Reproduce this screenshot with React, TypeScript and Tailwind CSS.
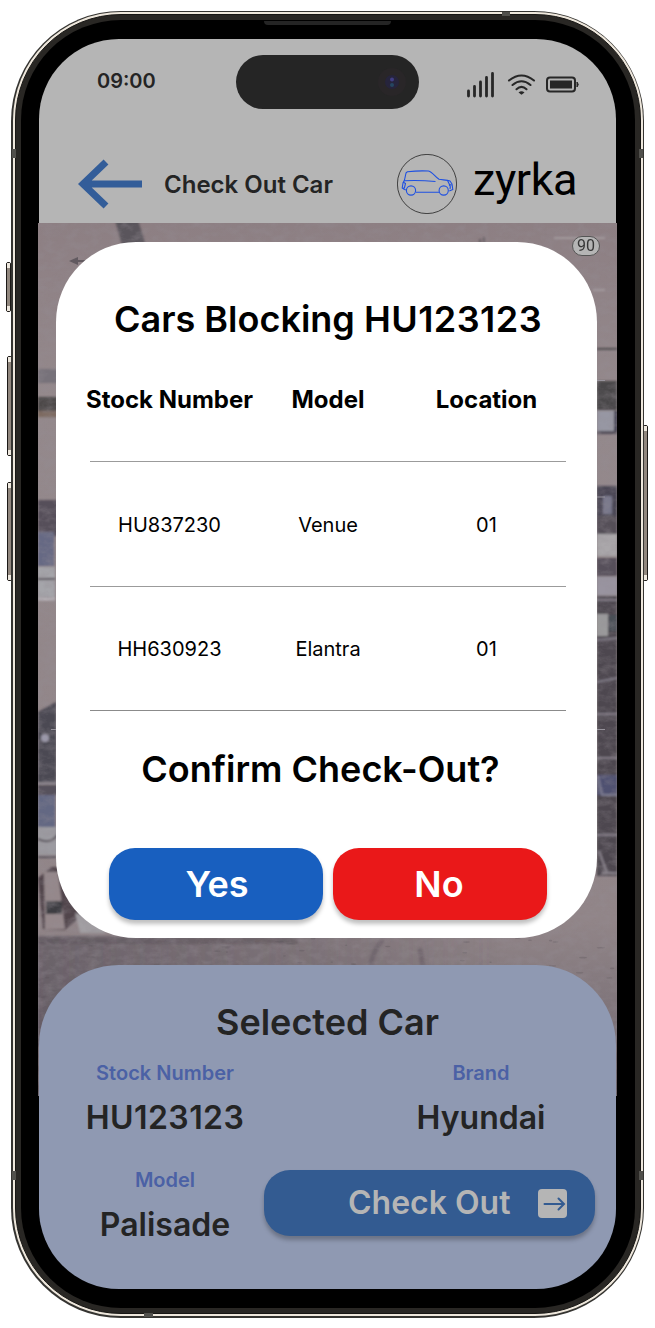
import React from "react";

const speck = (seed: number) => {
  const x = Math.sin(seed * 127.1) * 43758.5453;
  return x - Math.floor(x);
};

function Aerial() {
  return (
    <svg className="block h-full w-full" viewBox="38 223 579 873" preserveAspectRatio="none">
      <defs>
        <filter id="grain" x="0" y="0" width="100%" height="100%">
          <feTurbulence type="fractalNoise" baseFrequency="0.09 0.14" numOctaves="4" seed="8" />
          <feColorMatrix values="0 0 0 0 0.3  0 0 0 0 0.27  0 0 0 0 0.3  1.3 0.5 0 0 -0.72" />
        </filter>
        <filter id="soft"><feGaussianBlur stdDeviation="0.8" /></filter>
        <linearGradient id="dirt" x1="0" x2="0" y1="0" y2="1">
          <stop offset="0" stopColor="#8d7f83" /><stop offset="0.2" stopColor="#94898c" />
          <stop offset="0.8" stopColor="#918588" /><stop offset="1" stopColor="#6d646c" />
        </linearGradient>
        <linearGradient id="shade" x1="0" x2="1" y1="0" y2="0">
          <stop offset="0" stopColor="#57505a" stopOpacity=".6" /><stop offset="0.5" stopColor="#57505a" stopOpacity=".25" />
          <stop offset="0.8" stopColor="#57505a" stopOpacity="0" />
        </linearGradient>
      </defs>
      <rect x="38" y="223" width="579" height="873" fill="url(#dirt)" />
      <g filter="url(#soft)">
        <path d="M115 220h23l8 26h-24z" fill="#5a555b" />
        <path d="M38 369h22v14H38z" fill="#77727a" />
        <path d="M38 397h22v14H38z" fill="#4d4a48" />
        <path d="M38 411h22v6H38z" fill="#7d6b61" />
        <path d="M38 500h22v36H38z" fill="#56505a" />
        <path d="M38 532h16v34H38z" fill="#666984" />
        <path d="M38 567h17v30H38z" fill="#a5a5aa" />
        <path d="M38 579h17" stroke="#504c54" strokeWidth="2" />
        <path d="M38 599h17" stroke="#bbb7bd" strokeWidth="3" />
        <path d="M38 712l18-10v81H38z" fill="#4c4852" />
        <circle cx="45" cy="738" r="4" fill="#9b99aa" />
        <path d="M38 783h20" stroke="#85808a" strokeWidth="2" />
        <path d="M38 785h20v10H38z" fill="#57515b" />
        <path d="M38 795h17v35H38z" fill="#646783" />
        <path d="M38 827h20v28H38z" fill="#9c9ba1" />
        <path d="M38 839c8 4 15 3 20-5M38 857h18" stroke="#59535b" strokeWidth="2" fill="none" />
        <path d="M38 878l14-11 8 0 22 48-17 15-22-1z" fill="#51454c" />
        <path d="M44 872h14l7 57H45z" fill="#95888b" />
        <path d="M46 901h16v13H46z" fill="#3e3c42" />
        <path d="M75 913l17 5 14 15H80z" fill="#a29fa3" />
        <path d="M38 938h260v6H38z" fill="#675e61" opacity=".6" />
        <path d="M38 936h579v110H38z" fill="url(#shade)" />
        <path d="M383 940q-12 12-12 28M420 948l3 20" stroke="#675e66" strokeWidth="5" fill="none" opacity=".6" />
        <path d="M597 348h20v2h-20z" fill="#4e484e" />
        <path d="M597 381h20v29h-20z" fill="#4a4748" />
        <path d="M597 411h17v20h-17z" fill="#9797a3" />
        <path d="M614 411h3v20h-3z" fill="#35344a" />
        <path d="M597 431h20v3h-20z" fill="#514c56" />
        <path d="M597 486h20v30h-20z" fill="#4c4755" />
        <path d="M603 496h9v18h-9z" fill="#77778b" />
        <path d="M597 516h20v18h-20z" fill="#555059" />
        <path d="M597 534h20v22h-20z" fill="#aaa7aa" />
        <path d="M597 558h20v18h-20z" fill="#56505a" />
        <path d="M597 577h20v18h-20z" fill="#9994a0" />
        <path d="M597 596h20v280h-20z" fill="#4d4750" />
        <path d="M597 614h11v22h-11z" fill="#9b9b9c" />
        <path d="M609 615h8v16h-8z" fill="#495057" />
        <path d="M597 640l20-2M597 682l20-4M597 714h20M597 758h20M597 835h20M597 600h20" stroke="#817c87" strokeWidth="2" />
        <path d="M597 775h20v20h-20z" fill="#505171" />
        <path d="M598 776l4 19h15" stroke="#7b7b91" strokeWidth="2" fill="none" />
        <path d="M599 851l8 22M602 873h15" stroke="#87818a" strokeWidth="2" />
        <path d="M554 238h51M593 290h12" stroke="#a69ca0" strokeWidth="2" />
        <path d="M480 239v4M484 237v6" stroke="#655c62" strokeWidth="2" />
      </g>
      {Array.from({ length: 90 }, (_, i) => (
        <ellipse key={i} cx={38 + speck(i) * 579} cy={935 + speck(i + 100) * 80} rx={1 + speck(i + 200) * 4} ry="0.8" fill="#554e55" opacity=".3" />
      ))}
      <rect x="38" y="223" width="579" height="873" filter="url(#grain)" opacity=".5" />
      <path d="M69 261l9-4v3h8v2h-8v3z" fill="#625a60" />
      <path d="M597 380.500h8M597 497h8M597 729.500h8M51 729.500h5" stroke="#97939c" />
    </svg>
  );
}

function CarLogo() {
  return (
    <svg className="h-[60px] w-[60px]" viewBox="397 154 60 60" fill="none">
      <circle cx="427" cy="184" r="29.600" stroke="#222" strokeWidth=".8" />
      <g stroke="#1e50e2" strokeWidth="1.100" strokeLinejoin="round">
        <path d="M404.500 180l1.500-7 1.500-1.300q11-1.200 21-.7c4 1 6.500 5.500 10.500 8.300 4 .7 8 .5 11 1.700l2 3 .8 5.500-3.500 1.500M404.500 180l-1.500 3-.8 5 3.500 2M416 192.300h23" />
        <path d="M404 180.800q15-.8 31.500.7M403 182l2.500 1.500-1 4-1.500 1.500M447.500 180.500l2 4 2.300.5M450 189q1-3-1-4.500" />
        <circle cx="411" cy="190.500" r="4.600" /><circle cx="443.700" cy="190.500" r="4.600" />
      </g>
    </svg>
  );
}

function StatusIcons() {
  return (
    <svg className="h-[28px] w-[116px]" viewBox="465 70 116 28" fill="none" stroke="#272727">
      <path d="M468.500 91v5M474.500 86.500v9.500M480.500 82v14M486.500 77.500v18.500M492.500 73.500v22.500" strokeWidth="2.800" strokeLinecap="round" />
      <path d="M509 80.500q12.500-10 25 0M512.500 85q9-7.500 18 0M516.500 89.200q5-4.500 10 0" strokeWidth="2.100" strokeLinecap="round" />
      <path d="M518.500 92.500q3-2.500 6 0l-3 2.300z" fill="#272727" stroke="none" />
      <rect x="547" y="77.500" width="28" height="14" rx="3" strokeWidth="2" />
      <rect x="550" y="80.500" width="22" height="8" fill="#272727" stroke="none" />
      <path d="M577 82q2.500 2.500 0 5z" fill="#272727" />
    </svg>
  );
}

function Row({ cells, rule }: { cells: string[]; rule: string }) {
  return (
    <div className={`ml-[34px] mr-[31px] flex items-center border-b pt-[2px] text-xl ${rule}`}>
      <span className="w-[159px] shrink-0 text-center">{cells[0]}</span>
      <span className="w-[158px] shrink-0 text-center">{cells[1]}</span>
      <span className="w-[159px] shrink-0 text-center">{cells[2]}</span>
    </div>
  );
}

function Modal() {
  return (
    <section className="absolute left-[18px] top-[19px] flex h-[696px] w-[541px] flex-col rounded-[80px] bg-white text-black">
      <h1 className="mt-[54px] h-[47px] pl-[3px] text-center text-[36px] font-semibold leading-[46px]">
        Cars Blocking <span className="tracking-[0.45px]">HU123123</span>
      </h1>
      <div className="ml-[34px] mr-[31px] flex h-[119px] items-start border-b border-[#9b9b9b] pt-[41px] text-[24px] font-bold leading-[32px]">
        <span className="flex w-[159px] shrink-0 justify-center whitespace-nowrap">Stock Number</span>
        <span className="w-[158px] shrink-0 text-center">Model</span>
        <span className="w-[159px] shrink-0 text-center">Location</span>
      </div>
      <Row cells={["HU837230", "Venue", "01"]} rule="h-[125px] border-[#9b9b9b]" />
      <Row cells={["HH630923", "Elantra", "01"]} rule="h-[124px] border-[#8b8b8b]" />
      <h2 className="mt-[35px] h-[46px] pr-[12px] text-center text-[36px] font-semibold leading-[46px]">Confirm Check-Out?</h2>
      <div className="ml-[53px] mt-[56px] flex gap-[10px] text-[36px] font-semibold text-white">
        <button className="h-[72px] w-[214px] rounded-[26px] bg-[#185fbf] pl-[2px] shadow-[0_4px_4px_rgba(0,0,0,0.25)]">Yes</button>
        <button className="h-[72px] w-[214px] rounded-[26px] bg-[#ea1819] pr-[2px] shadow-[0_4px_4px_rgba(0,0,0,0.25)]">No</button>
      </div>
    </section>
  );
}

function SideButton({ place }: { place: string }) {
  return (
    <div className={`absolute flex w-[5px] flex-col justify-between rounded-[2px] border border-[#1c1917] bg-[#91877e] ${place}`}>
      <i className="h-[5px] bg-[#eee8de]" /><i className="h-[5px] bg-[#eee8de]" />
    </div>
  );
}

export default function App() {
  return (
    <main className="relative flex h-[1328px] w-[655px] overflow-hidden bg-white pl-[11px] pt-[10.500px] font-['Inter',sans-serif]">
      <SideButton place="left-[6px] top-[262px] h-[50px]" />
      <SideButton place="left-[7px] top-[356px] h-[100px]" />
      <SideButton place="left-[7px] top-[482px] h-[99px]" />
      <SideButton place="left-[643px] top-[425px] h-[156px]" />
      <div className="relative h-[1307px] w-[633px] rounded-[110px] bg-[#353431] p-[1.500px]">
        <div className="h-full rounded-[108px] bg-[#eee7dc] p-[2px]">
          <div className="h-full rounded-[106px] border border-[#171614] bg-[#292724] p-[5px]">
            <div className="h-full rounded-[100px] bg-black pl-[18.500px] pt-[18.500px]">
              <div className="h-[1250px] w-[577px]">
                <header className="h-[184px] rounded-t-[80px] bg-[#b5b5b5] pt-[16.500px] text-[#242424]">
                  <div className="flex h-[54px] items-start">
                    <time className="ml-[58px] mt-[12px] w-[139px] text-xl font-semibold leading-[28px]">09:00</time>
                    <div className="flex h-[54px] w-[183px] items-center justify-end rounded-full bg-[#252525] pr-[13px]">
                      <svg className="h-7 w-7" viewBox="0 0 28 28"><circle cx="14" cy="14" r="14" fill="#292628" /><circle cx="14" cy="14" r="7" fill="#26243c" /><circle cx="14" cy="11.500" r="2" fill="#403e84" /><circle cx="14" cy="17" r="2" fill="#254660" /></svg>
                    </div>
                    <div className="ml-[46px] mt-[15px]"><StatusIcons /></div>
                  </div>
                  <div className="mt-[44.500px] flex h-[60px] items-center">
                    <svg className="ml-[39px] h-[50px] w-[64px]" viewBox="0 0 64 50" fill="none" stroke="#335d99"><path d="M64 25H5M28 3L5 25l23 22" strokeWidth="7" /></svg>
                    <span className="ml-[22px] w-[233px] pt-[2px] text-2xl font-semibold">Check Out Car</span>
                    <CarLogo />
                    <span className="-mt-[7px] ml-[16px] font-['Roboto'] text-[45px] leading-[54px] tracking-[-0.4px] text-black">zyrka</span>
                  </div>
                </header>
                <section className="relative -mx-px h-[873px] w-[579px]">
                  <Aerial />
                  <span className="absolute left-[534px] top-[13px] flex h-5 w-7 items-center justify-center rounded-full border border-[#555] bg-[#b5b5b5] pt-px font-['Roboto'] text-[16px] text-[#373737]">90</span>
                  <Modal />
                </section>
                <section className="relative -mt-[131px] h-[324px] rounded-[80px] bg-[#8f99b2] pt-[34px] text-[#242424]">
                  <h2 className="text-center text-[36px] font-semibold leading-[46px]">Selected Car</h2>
                  <div className="mt-[15px] flex justify-between pl-[21px] pr-[35px] text-center font-semibold">
                    <div className="w-[210px]"><p className="text-xl leading-[26px] text-[#4b61a5]">Stock Number</p><p className="mt-[10px] text-[32px] leading-[44px] tracking-[0.45px]">HU123123</p></div>
                    <div className="w-[200px]"><p className="text-xl leading-[26px] text-[#4b61a5]">Brand</p><p className="mt-[10px] text-[32px] leading-[44px]">Hyundai</p></div>
                  </div>
                  <div className="mt-[27px] flex items-start pl-[20px] font-semibold">
                    <div className="w-[205px] pl-[7px] text-center"><p className="text-xl leading-[26px] text-[#4b61a5]">Model</p><p className="mt-[10px] text-[32px] leading-[44px]">Palisade</p></div>
                    <button className="mt-[3px] flex h-[66px] w-[331px] items-center rounded-[26px] bg-[#335b91] pl-[84px] pt-px text-[32px] text-[#b5b5b5] shadow-[0_4px_4px_rgba(0,0,0,0.25)]">
                      <span className="w-[190px] whitespace-nowrap text-left">Check Out</span>
                      <svg className="h-[29px] w-[29px]" viewBox="0 0 29 29" fill="none"><rect width="29" height="29" rx="4" fill="#b5b5b5" /><path d="M6.500 15h19M20.500 9.500l5.500 5.500-5.500 5.500" stroke="#335b91" strokeWidth="2" strokeLinecap="round" /></svg>
                    </button>
                  </div>
                </section>
              </div>
            </div>
          </div>
        </div>
        <i className="absolute left-[253px] top-[10px] h-[4px] w-[127px] rounded-b bg-[#252525]" />
        <i className="absolute left-[491px] top-px h-[4px] w-[8px] bg-[#51504c]" />
        <i className="absolute left-[133px] top-[1302px] h-[4px] w-[9px] bg-[#51504c]" />
        <i className="absolute left-px top-[138px] h-[9px] w-[4px] bg-[#51504c]" />
        <i className="absolute left-[628px] top-[138px] h-[9px] w-[4px] bg-[#51504c]" />
        <i className="absolute left-px top-[1160px] h-[9px] w-[4px] bg-[#51504c]" />
        <i className="absolute left-[628px] top-[1160px] h-[9px] w-[4px] bg-[#51504c]" />
      </div>
    </main>
  );
}
